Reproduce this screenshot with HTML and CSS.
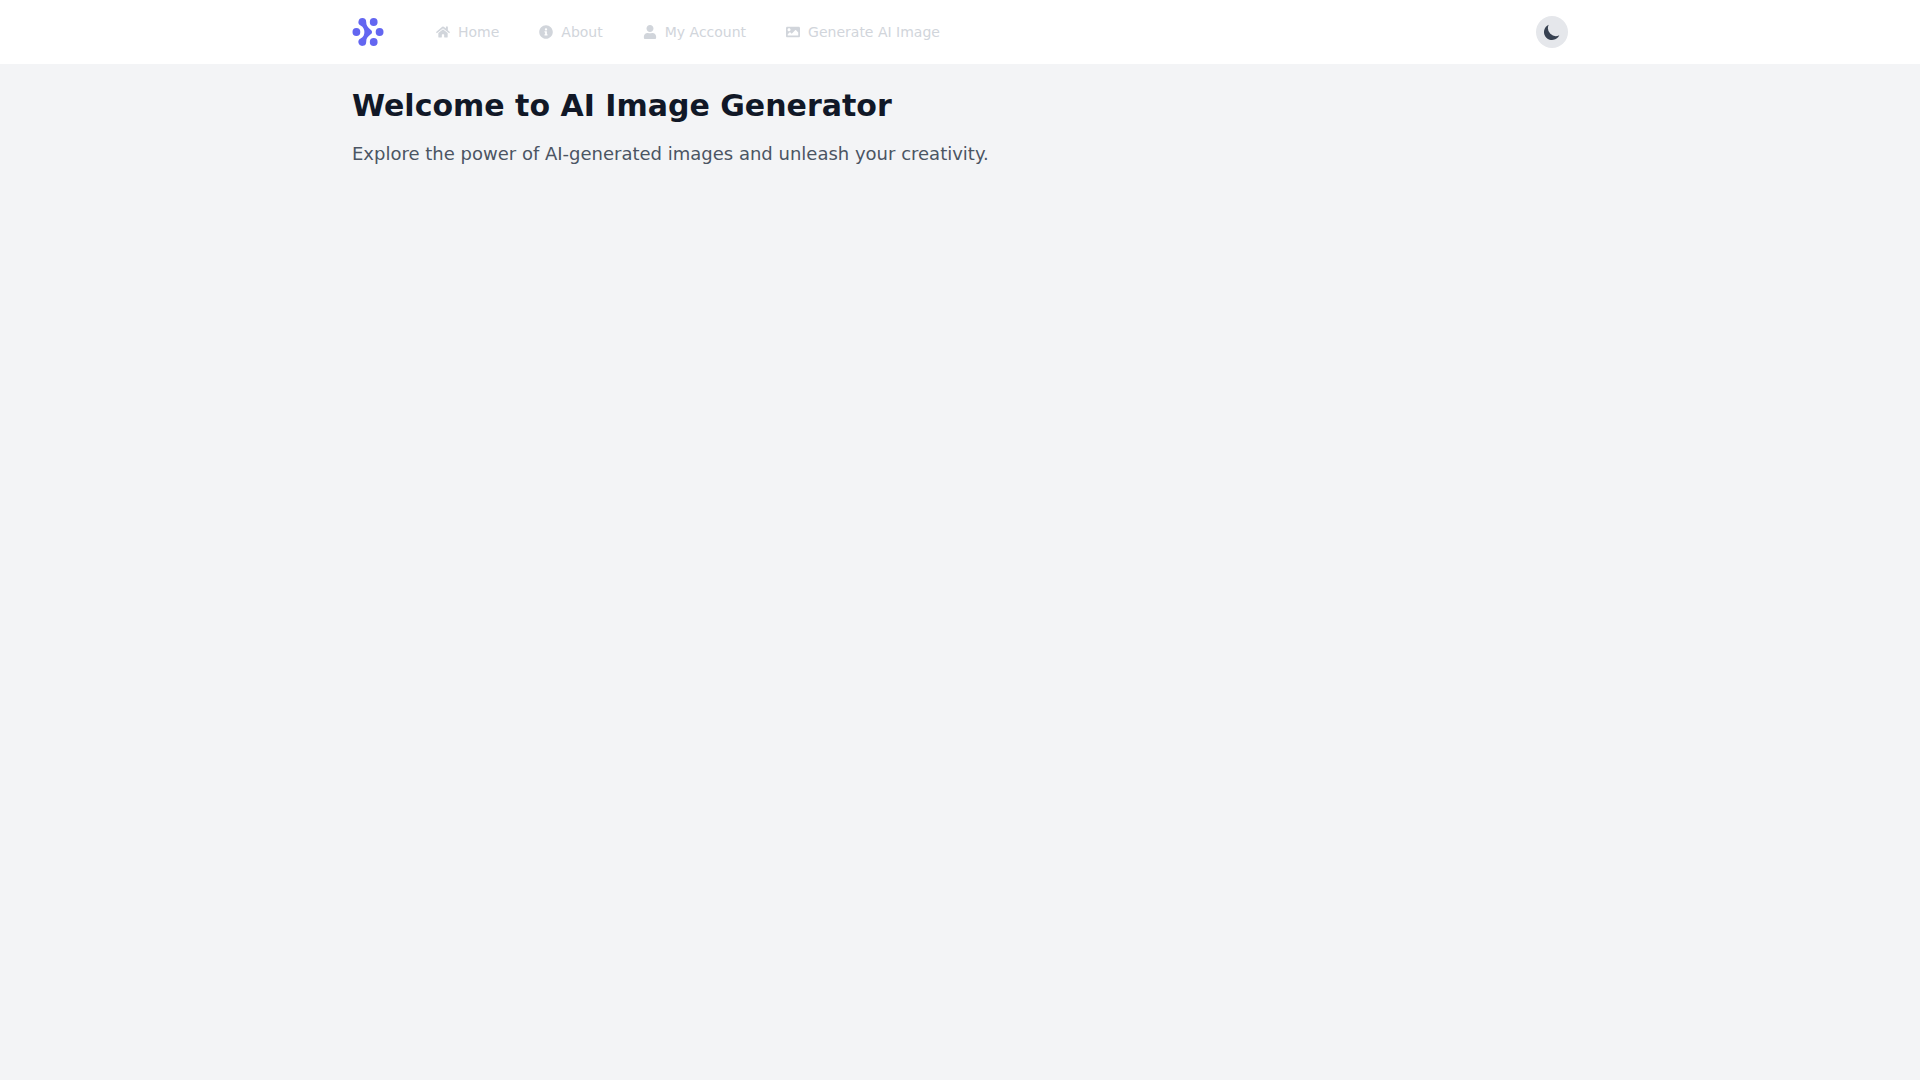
FILE: index.html
```html
<!DOCTYPE html>
<html lang="en">
<head>
  <meta charset="utf-8">
  <meta name="viewport" content="width=device-width, initial-scale=1">
  <title>AI Image Generator</title>
  <link rel="stylesheet" href="styles.css">
</head>
<body>
  <header class="site-header">
    <div class="container header-bar">
      <a class="logo" href="#" aria-label="AI Image Generator">
        <svg class="logo-mark" viewBox="0 0 32 32" aria-hidden="true">
          <circle cx="21.7" cy="6" r="3.9"/>
          <circle cx="4.4" cy="16" r="3.9"/>
          <circle cx="27.6" cy="16" r="3.9"/>
          <circle cx="21.7" cy="26" r="3.9"/>
          <path d="M10.3 2.1A3.9 3.9 0 0 1 14.2 6C14.2 9.5 15.5 11 18.4 13.4Q21.8 16 18.4 18.6C15.5 21 14.2 22.5 14.2 26A3.9 3.9 0 1 1 8.6 22.5C11.5 21 12.4 18.5 12.4 16S11.5 11 8.6 9.5A3.9 3.9 0 0 1 10.3 2.1Z"/>
        </svg>
      </a>
      <nav class="nav" aria-label="Main">
        <a class="nav-link" href="#">
          <svg class="nav-icon" viewBox="0 0 576 512" aria-hidden="true"><path d="M280.37 148.26L96 300.11V464a16 16 0 0 0 16 16l112.06-.29a16 16 0 0 0 15.92-16V368a16 16 0 0 1 16-16h64a16 16 0 0 1 16 16v95.64a16 16 0 0 0 16 16.05L464 480a16 16 0 0 0 16-16V300L295.67 148.26a12.19 12.19 0 0 0-15.3 0zM571.6 251.47L488 182.56V44.05a12 12 0 0 0-12-12h-56a12 12 0 0 0-12 12v72.61L318.47 43a48 48 0 0 0-61 0L4.34 251.47a12 12 0 0 0-1.6 16.9l25.5 31A12 12 0 0 0 45.15 301l235.22-193.74a12.19 12.19 0 0 1 15.3 0L530.9 301a12 12 0 0 0 16.9-1.6l25.5-31a12 12 0 0 0-1.7-16.93z"/></svg>
          Home
        </a>
        <a class="nav-link" href="#">
          <svg class="nav-icon" viewBox="0 0 512 512" aria-hidden="true"><path d="M256 8C119.043 8 8 119.083 8 256c0 136.997 111.043 248 248 248s248-111.003 248-248C504 119.083 392.957 8 256 8zm0 110c23.196 0 42 18.804 42 42s-18.804 42-42 42-42-18.804-42-42 18.804-42 42-42zm56 254c0 6.627-5.373 12-12 12h-88c-6.627 0-12-5.373-12-12v-24c0-6.627 5.373-12 12-12h12v-64h-12c-6.627 0-12-5.373-12-12v-24c0-6.627 5.373-12 12-12h64c6.627 0 12 5.373 12 12v100h12c6.627 0 12 5.373 12 12v24z"/></svg>
          About
        </a>
        <a class="nav-link" href="#">
          <svg class="nav-icon" viewBox="0 0 448 512" aria-hidden="true"><path d="M224 256c70.7 0 128-57.3 128-128S294.7 0 224 0 96 57.3 96 128s57.3 128 128 128zm89.6 32h-16.7c-22.2 10.2-46.9 16-72.9 16s-50.6-5.8-72.9-16h-16.7C60.2 288 0 348.2 0 422.4V464c0 26.5 21.5 48 48 48h352c26.5 0 48-21.5 48-48v-41.6c0-74.2-60.2-134.4-134.4-134.4z"/></svg>
          My Account
        </a>
        <a class="nav-link" href="#">
          <svg class="nav-icon" viewBox="0 0 512 512" aria-hidden="true"><path d="M464 448H48c-26.51 0-48-21.49-48-48V112c0-26.51 21.49-48 48-48h416c26.51 0 48 21.49 48 48v288c0 26.51-21.49 48-48 48zM112 120c-30.928 0-56 25.072-56 56s25.072 56 56 56 56-25.072 56-56-25.072-56-56-56zM64 384h384V272l-87.515-87.515c-4.686-4.686-12.284-4.686-16.971 0L208 320l-55.515-55.515c-4.686-4.686-12.284-4.686-16.971 0L64 336v48z"/></svg>
          Generate AI Image
        </a>
      </nav>
      <button class="theme-toggle" type="button" aria-label="Toggle dark mode">
        <svg class="theme-icon" viewBox="0 0 20 20" aria-hidden="true"><path d="M17.293 13.293A8 8 0 016.707 2.707a8.001 8.001 0 1010.586 10.586z"/></svg>
      </button>
    </div>
  </header>
  <main class="container content">
    <h1 class="title">Welcome to AI Image Generator</h1>
    <p class="lead">Explore the power of AI-generated images and unleash your creativity.</p>
  </main>
</body>
</html>
```
FILE: styles.css
```css
*,
*::before,
*::after {
  box-sizing: border-box;
}

body {
  margin: 0;
  min-height: 100vh;
  background: #f3f4f6;
  color: #111827;
  font-family: "DejaVu Sans", sans-serif;
}

.container {
  max-width: 1280px;
  margin: 0 auto;
  padding: 0 32px;
}

.site-header {
  background: #fff;
}

.header-bar {
  display: flex;
  align-items: center;
  gap: 40px;
  min-height: 64px;
}

.logo,
.logo-mark {
  display: block;
  width: 32px;
  height: 32px;
  fill: #6366f1;
}

.nav {
  display: flex;
  flex-wrap: wrap;
  gap: 16px;
}

.nav-link {
  display: flex;
  align-items: center;
  gap: 8px;
  padding: 8px 12px;
  color: #d1d5db;
  font-size: 14px;
  line-height: 20px;
  text-decoration: none;
}

.nav-icon {
  width: 14px;
  height: 14px;
  fill: currentColor;
}

.theme-toggle {
  display: flex;
  margin-left: auto;
  padding: 6px;
  border: 0;
  border-radius: 50%;
  background: #e5e7eb;
  color: #374151;
  cursor: pointer;
}

.theme-icon {
  width: 20px;
  height: 20px;
  fill: currentColor;
}

.content {
  padding-top: 24px;
  padding-bottom: 24px;
}

.title {
  margin: 0 0 16px;
  font-size: 30px;
  font-weight: 700;
  line-height: 36px;
}

.lead {
  margin: 0;
  color: #4b5563;
  font-size: 18px;
  line-height: 28px;
}
```
